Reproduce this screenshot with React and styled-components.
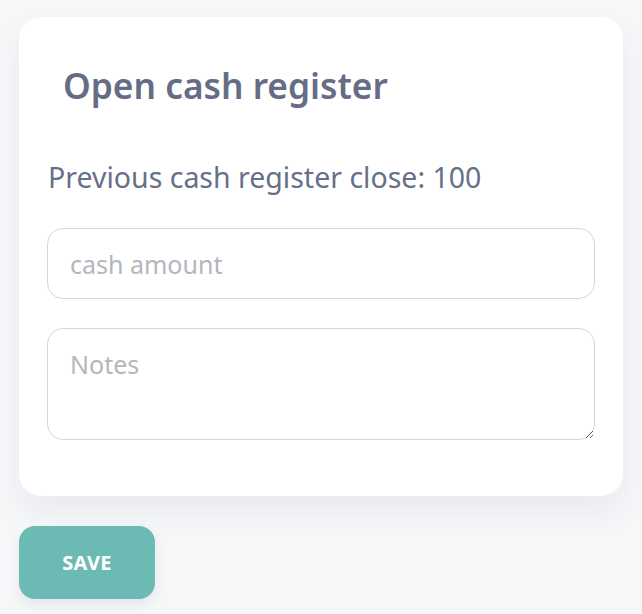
import React from "react";
import styled, { createGlobalStyle } from "styled-components";

const GlobalStyle = createGlobalStyle`
  html, body {
    margin: 0;
    padding: 0;
    background: #f6f7f9;
    font-family: "Noto Sans", "Open Sans", sans-serif;
  }
`;

const Page = styled.div`
  padding: 17px 19px 15px 19px;
  width: 604px;
  display: flex;
  flex-direction: column;
  align-items: flex-start;
  gap: 30px;
`;

const Card = styled.div`
  width: 100%;
  box-sizing: border-box;
  background: #ffffff;
  border-radius: 22px;
  padding: 44px 28px 56px 28px;
  box-shadow: 0 16px 32px rgba(30, 40, 60, 0.06);
  display: flex;
  flex-direction: column;
`;

const Title = styled.h1`
  margin: 0 0 0 16px;
  font-size: 35.3px;
  font-weight: 600;
  line-height: 48px;
  color: #656d85;
`;

const Subtitle = styled.p`
  margin: 49px 0 32px 1px;
  font-size: 28.5px;
  line-height: 38px;
  color: #657089;
`;

const Field = styled.input`
  box-sizing: border-box;
  width: 100%;
  height: 71px;
  border: 1px solid #d4d6da;
  border-radius: 16px;
  padding: 0 22px;
  font-family: inherit;
  font-size: 25px;
  color: #4a5164;
  outline: none;
  &::placeholder {
    color: #b3b6bd;
  }
`;

const Notes = styled.textarea`
  box-sizing: border-box;
  width: 100%;
  height: 112px;
  margin-top: 29px;
  border: 1px solid #d4d6da;
  border-radius: 16px;
  padding: 18px 22px;
  font-family: inherit;
  font-size: 25px;
  color: #4a5164;
  outline: none;
  resize: vertical;
  display: block;
  &::placeholder {
    color: #b3b6bd;
  }
`;

const SaveButton = styled.button`
  width: 136px;
  height: 73px;
  border: none;
  border-radius: 16px;
  background: #6bbab3;
  color: #ffffff;
  font-family: inherit;
  font-size: 20px;
  font-weight: 700;
  letter-spacing: 0.3px;
  box-shadow: 0 6px 12px rgba(30, 40, 60, 0.08);
  cursor: pointer;
`;

export default function App() {
  return (
    <>
      <GlobalStyle />
      <Page>
        <Card>
          <Title>Open cash register</Title>
          <Subtitle>Previous cash register close: 100</Subtitle>
          <Field placeholder="cash amount" />
          <Notes placeholder="Notes" />
        </Card>
        <SaveButton>SAVE</SaveButton>
      </Page>
    </>
  );
}
